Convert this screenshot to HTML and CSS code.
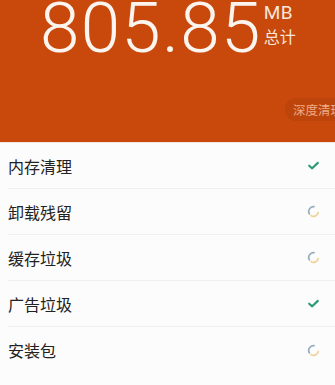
FILE: index.html
```html
<!DOCTYPE html>
<html lang="zh">
<head>
<meta charset="utf-8">
<link rel="stylesheet" href="styles.css">
</head>
<body>
<div class="header">
  <div class="total">
    <span class="num">805.85</span>
    <div class="unit">
      <span class="mb">MB</span>
      <span class="label">总计</span>
    </div>
  </div>
  <div class="deep">深度清理</div>
</div>
<ul class="list">
  <li class="row"><span class="name">内存清理</span>
    <svg class="icon" viewBox="0 0 12 12"><path d="M2 6.2 L4.8 8.6 L10 3.6" fill="none" stroke="#2f9a78" stroke-width="2" stroke-linecap="round" stroke-linejoin="round"/></svg></li>
  <li class="row"><span class="name">卸载残留</span>
    <svg class="icon" viewBox="0 0 12 12"><path d="M6.5 1.6 A4.4 4.4 0 0 0 2.2 8.2" fill="none" stroke="#94adbf" stroke-width="1.6" stroke-linecap="round"/><path d="M3.8 9.9 A4.4 4.4 0 0 0 10.3 7" fill="none" stroke="#f0d294" stroke-width="1.6" stroke-linecap="round"/></svg></li>
  <li class="row"><span class="name">缓存垃圾</span>
    <svg class="icon" viewBox="0 0 12 12"><path d="M6.5 1.6 A4.4 4.4 0 0 0 2.2 8.2" fill="none" stroke="#94adbf" stroke-width="1.6" stroke-linecap="round"/><path d="M3.8 9.9 A4.4 4.4 0 0 0 10.3 7" fill="none" stroke="#f0d294" stroke-width="1.6" stroke-linecap="round"/></svg></li>
  <li class="row"><span class="name">广告垃圾</span>
    <svg class="icon" viewBox="0 0 12 12"><path d="M2 6.2 L4.8 8.6 L10 3.6" fill="none" stroke="#2f9a78" stroke-width="2" stroke-linecap="round" stroke-linejoin="round"/></svg></li>
  <li class="row last"><span class="name">安装包</span>
    <svg class="icon" viewBox="0 0 12 12"><path d="M6.5 1.6 A4.4 4.4 0 0 0 2.2 8.2" fill="none" stroke="#94adbf" stroke-width="1.6" stroke-linecap="round"/><path d="M3.8 9.9 A4.4 4.4 0 0 0 10.3 7" fill="none" stroke="#f0d294" stroke-width="1.6" stroke-linecap="round"/></svg></li>
</ul>
</body>
</html>
```
FILE: styles.css
```css
* { box-sizing: border-box; }
html, body {
  margin: 0;
  padding: 0;
  background: #fcfcfc;
  font-family: "Noto Sans CJK SC", Roboto, sans-serif;
  overflow: hidden;
}
.header {
  height: 143px;
  background: #c8490b;
  border-bottom: 1px solid #f3e6df;
  display: flex;
  flex-direction: column;
  overflow: hidden;
}
.total {
  display: flex;
  align-items: flex-start;
  padding-left: 40px;
  margin-top: -13px;
  height: 72px;
}
.num {
  font-family: Roboto, sans-serif;
  font-weight: 300;
  font-size: 71px;
  line-height: 82px;
  color: #fbf4ef;
  letter-spacing: 1.3px;
}
.unit {
  display: flex;
  flex-direction: column;
  margin-left: 2px;
  margin-top: 15px;
  color: #f6e6dc;
}
.mb {
  font-family: Roboto, sans-serif;
  font-size: 19px;
  line-height: 22px;
  letter-spacing: 0.5px;
}
.label {
  font-size: 16px;
  line-height: 24px;
}
.deep {
  align-self: flex-start;
  margin-left: 285px;
  margin-top: 39px;
  height: 23px;
  padding: 0 8px;
  border-radius: 12px;
  background: #bd440b;
  color: #eeab85;
  font-size: 12.5px;
  line-height: 23px;
  white-space: nowrap;
}
.list {
  list-style: none;
  margin: 0;
  padding: 0 0 0 8px;
}
.row {
  height: 46px;
  display: flex;
  align-items: center;
  justify-content: space-between;
  padding-right: 15px;
  border-bottom: 1px solid #f0f0f0;
}
.row.last { border-bottom: none; }
.name {
  font-size: 16px;
  color: #222;
}
.icon {
  width: 13px;
  height: 13px;
}
```
